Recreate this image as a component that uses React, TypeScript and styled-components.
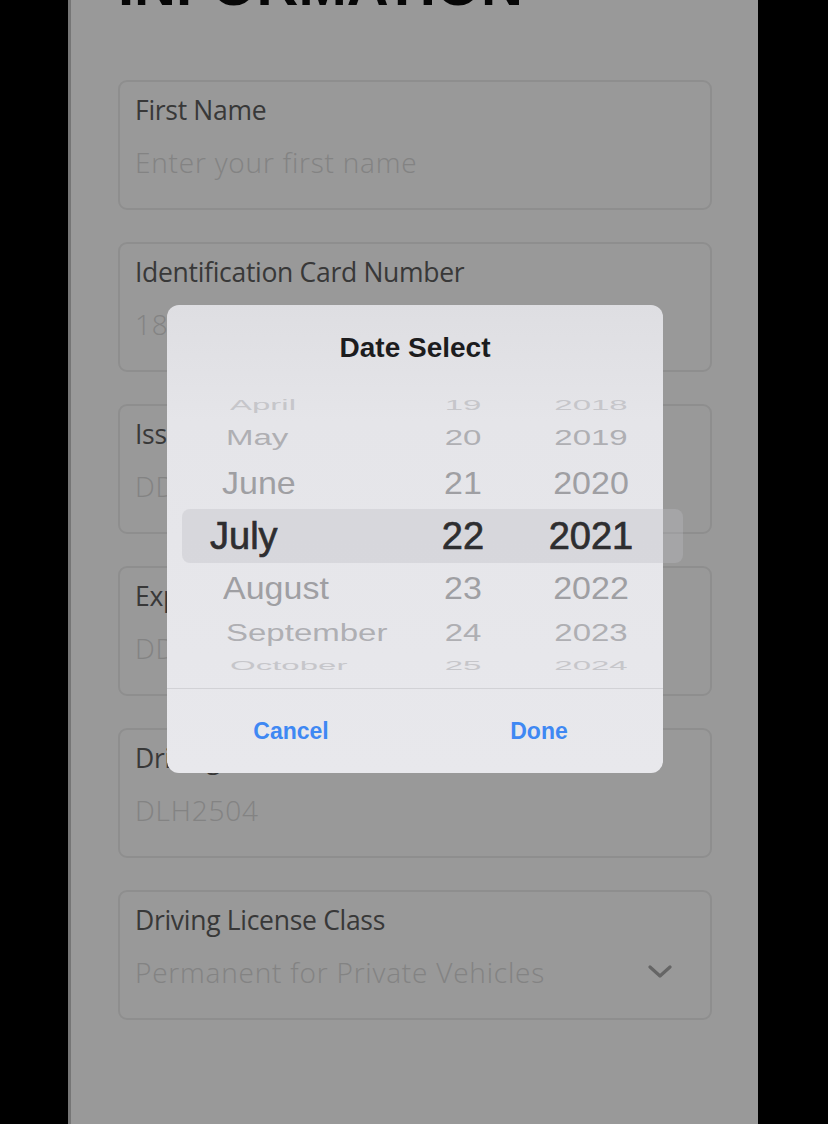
import React from 'react';
import styled, { createGlobalStyle } from 'styled-components';

const Global = createGlobalStyle`
  html, body { margin: 0; padding: 0; background: #000; }
  body { width: 828px; height: 1124px; overflow: hidden; }
  * { box-sizing: border-box; }
`;

const Screen = styled.div`
  position: relative;
  margin-left: 68px;
  width: 690px;
  height: 1124px;
  background: #fff;
  border-left: 3px solid #767676;
  overflow: hidden;
`;

const Content = styled.div`
  padding: 0 46px 0 47px;
`;

const Title = styled.h1`
  margin: -44px 0 0 0;
  font-family: 'Liberation Sans', Arial, sans-serif;
  font-weight: 700;
  font-size: 58px;
  line-height: 58px;
  color: #0c0c0c;
  white-space: nowrap;
`;

const Form = styled.div`
  margin-top: 66px;
  display: flex;
  flex-direction: column;
  gap: 32px;
`;

const Card = styled.div`
  height: 130px;
  border: 2px solid #ededed;
  border-radius: 9px;
  padding: 13px 0 0 15px;
  font-family: 'Open Sans', 'Noto Sans', sans-serif;
`;

const Label = styled.div`
  font-size: 26.5px;
  line-height: 30px;
  color: #5e5e5e;
  white-space: nowrap;
  letter-spacing: -0.3px;
`;

const ValueRow = styled.div`
  margin-top: 22px;
  display: flex;
  align-items: center;
  justify-content: space-between;
  height: 30px;
`;

const Placeholder = styled.div`
  font-size: 28px;
  font-weight: 300;
  line-height: 30px;
  color: #dadada;
  white-space: nowrap;
  letter-spacing: 0.8px;
`;

const Chevron = styled.svg`
  margin-right: 38px;
  flex: none;
`;

const Overlay = styled.div`
  position: absolute;
  inset: 0;
  background: rgba(0, 0, 0, 0.4);
  padding: 305px 0 0 96px;
`;

const Modal = styled.div`
  position: relative;
  width: 496px;
  height: 468px;
  border-radius: 12px;
  background: linear-gradient(#dedee2 0%, #e5e5e9 25%, #e8e8ec 100%);
  font-family: 'Liberation Sans', Arial, sans-serif;
  display: flex;
  flex-direction: column;
`;

const ModalTitle = styled.div`
  padding-top: 26px;
  line-height: 34px;
  font-size: 28px;
  font-weight: 700;
  color: #1c1c1e;
  text-align: center;
`;

const Picker = styled.div`
  position: relative;
  padding: 26px 0 9px;
  display: flex;
  flex-direction: column;
`;

const Band = styled.div`
  position: absolute;
  top: 144px;
  left: 15px;
  right: -20px;
  height: 54px;
  border-radius: 8px;
  background: rgba(189, 189, 193, 0.34);
`;

const Row = styled.div<{ $h: number; $s: number; $size: number; $color: string; $sel?: boolean }>`
  position: relative;
  height: ${(p) => p.$h}px;
  line-height: ${(p) => p.$h}px;
  display: grid;
  grid-template-columns: 250px 92px 1fr;
  font-size: ${(p) => p.$size}px;
  color: ${(p) => p.$color};
  transform: scaleY(${(p) => p.$s});
  white-space: nowrap;
  ${(p) => (p.$sel ? '-webkit-text-stroke: 0.7px #2e2e30;' : '')}
`;

const Month = styled.div<{ $indent: number }>`
  padding-left: ${(p) => p.$indent}px;
`;

const Day = styled.div`
  text-align: center;
`;

const Year = styled.div`
  padding-left: 10px;
  text-align: center;
`;

const Divider = styled.div`
  height: 1px;
  background: #d2d2d6;
`;

const Buttons = styled.div`
  flex: 1;
  display: grid;
  grid-template-columns: 1fr 1fr;
  align-items: center;
`;

const ActionButton = styled.button`
  background: none;
  border: none;
  padding: 0;
  font-family: 'Liberation Sans', Arial, sans-serif;
  font-size: 23px;
  font-weight: 700;
  color: #3f88f3;
  text-align: center;
`;

const fields = [
  { label: 'First Name', value: 'Enter your first name' },
  { label: 'Identification Card Number', value: '1809 5623 4471' },
  { label: 'Issue Date', value: 'DD/MM/YYYY' },
  { label: 'Expiry Date', value: 'DD/MM/YYYY' },
  { label: 'Driving License Number', value: 'DLH2504' },
  { label: 'Driving License Class', value: 'Permanent for Private  Vehicles', select: true },
];

const rows = [
  { m: 'April', d: '19', y: '2018', h: 28, s: 0.42, size: 33, color: '#c6c6ca', indent: 63 },
  { m: 'May', d: '20', y: '2019', h: 38, s: 0.68, size: 33, color: '#afafb3', indent: 59 },
  { m: 'June', d: '21', y: '2020', h: 52, s: 0.94, size: 34, color: '#9f9fa3', indent: 55 },
  { m: 'July', d: '22', y: '2021', h: 54, s: 1, size: 38, color: '#2e2e30', indent: 43, sel: true },
  { m: 'August', d: '23', y: '2022', h: 50, s: 0.94, size: 34, color: '#9f9fa3', indent: 56 },
  { m: 'September', d: '24', y: '2023', h: 40, s: 0.7, size: 33, color: '#afafb3', indent: 59 },
  { m: 'October', d: '25', y: '2024', h: 26, s: 0.4, size: 33, color: '#c6c6ca', indent: 63 },
];

export default function App() {
  return (
    <>
      <Global />
      <Screen>
        <Content>
          <Title>INFORMATION</Title>
          <Form>
            {fields.map((f) => (
              <Card key={f.label}>
                <Label>{f.label}</Label>
                <ValueRow>
                  <Placeholder>{f.value}</Placeholder>
                  {f.select && (
                    <Chevron width="24" height="14" viewBox="0 0 24 14">
                      <polyline points="2,2 12,11 22,2" fill="none" stroke="#a8a8a8" strokeWidth="3.2" strokeLinecap="round" strokeLinejoin="round" />
                    </Chevron>
                  )}
                </ValueRow>
              </Card>
            ))}
          </Form>
        </Content>
        <Overlay>
          <Modal>
            <ModalTitle>Date Select</ModalTitle>
            <Picker>
              <Band />
              {rows.map((r) => (
                <Row key={r.m} $h={r.h} $s={r.s} $size={r.size} $color={r.color} $sel={r.sel}>
                  <Month $indent={r.indent}>{r.m}</Month>
                  <Day>{r.d}</Day>
                  <Year>{r.y}</Year>
                </Row>
              ))}
            </Picker>
            <Divider />
            <Buttons>
              <ActionButton>Cancel</ActionButton>
              <ActionButton>Done</ActionButton>
            </Buttons>
          </Modal>
        </Overlay>
      </Screen>
    </>
  );
}
